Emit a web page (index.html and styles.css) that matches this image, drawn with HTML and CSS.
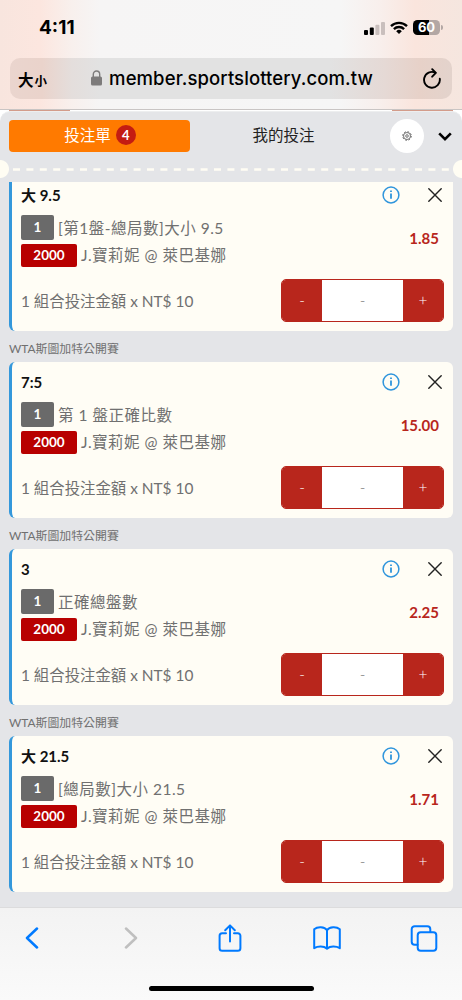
FILE: index.html
```html
<!DOCTYPE html>
<html lang="zh-Hant">
<head>
    <meta charset="UTF-8">
    <meta name="viewport" content="width=device-width, initial-scale=1.0">
    <title>投注單</title>
    <link rel="stylesheet" href="styles.css">
</head>
<body>
    <svg class="symbols" width="0" height="0">
        <symbol id="icon-info" viewBox="0 0 18 18">
            <circle cx="9" cy="9" r="7.9" fill="none" stroke="#2f95dc" stroke-width="1.5"/>
            <path d="M9 4.6v1.5M9 7.6v5.2" stroke="#2f95dc" stroke-width="1.8"/>
        </symbol>
        <symbol id="icon-close" viewBox="0 0 14 14">
            <path d="M.8.8l12.4 12.4M13.2.8L.8 13.2" stroke="#222" stroke-width="1.4" stroke-linecap="round"/>
        </symbol>
    </svg>

    <div class="phone">
        <header class="browser-top">
            <div class="status-bar">
                <span class="time">4:11</span>
                <div class="status-icons">
                    <svg width="21" height="14" viewBox="0 0 21 14">
                        <rect x="0" y="9" width="4" height="5" rx="1"/>
                        <rect x="5.8" y="6.5" width="4" height="7.5" rx="1"/>
                        <rect x="11.4" y="3.7" width="4" height="10.3" rx="1" fill="#c9bfbd"/>
                        <rect x="17" y="1" width="4" height="13" rx="1" fill="#c9bfbd"/>
                    </svg>
                    <svg width="18" height="13" viewBox="0 0 18 13">
                        <g fill="none" stroke="#000" stroke-width="2.3">
                            <path d="M1 5.1a11.3 11.3 0 0 1 16 0"/>
                            <path d="M3.9 8.1a7.2 7.2 0 0 1 10.2 0"/>
                        </g>
                        <path d="M9 13L6.2 10.2a4 4 0 0 1 5.6 0z"/>
                    </svg>
                    <div class="battery">60</div>
                </div>
            </div>
            <div class="address-bar">
                <span class="text-size">大<small>小</small></span>
                <span class="url">
                    <svg width="11" height="16" viewBox="0 0 11 16">
                        <rect x="0" y="6.5" width="11" height="9" rx="1.6" fill="#7d7b7b"/>
                        <path d="M2.3 7V4.2a3.2 3.2 0 0 1 6.4 0V7" fill="none" stroke="#7d7b7b" stroke-width="1.4"/>
                    </svg>
                    member.sportslottery.com.tw
                </span>
                <svg class="reload" width="18" height="21" viewBox="0 0 18 21" fill="none" stroke="#000" stroke-width="1.9" stroke-linecap="round" stroke-linejoin="round">
                    <path d="M16.800 10.800A7.900 7.900 0 1 1 12.400 4.700"/>
                    <path d="M9.200 1.200l3.600 3.700-3.600 3.800"/>
                </svg>
            </div>
        </header>

        <main class="page">
            <section class="slip">
                <nav class="slip-tabs">
                    <button class="tab active">投注單<span class="count">4</span></button>
                    <button class="tab">我的投注</button>
                    <span class="settings">
                        <svg width="10" height="10" viewBox="0 0 10 10" fill="none" stroke="#555">
                            <circle cx="5" cy="5" r="3.5" stroke-width=".8"/>
                            <circle cx="5" cy="5" r="4.3" stroke-width=".9" stroke-dasharray="1.7 1.677"/>
                            <circle cx="5" cy="5" r="1.3" stroke-width=".8"/>
                        </svg>
                    </span>
                    <svg class="chevron" width="14" height="9" viewBox="0 0 14 9" fill="none" stroke="#000" stroke-width="2.6">
                        <path d="M1.2 1.3L7 7.1l5.8-5.8"/>
                    </svg>
                </nav>
                <div class="ticket-edge">
                    <svg width="462" height="3"><path d="M13 1.5h436" stroke="#fffdf3" stroke-width="2.4" stroke-dasharray="7 6.4"/></svg>
                </div>

                <div class="bets">
                    <article class="bet">
                        <div class="bet-head">
                            <h2>大 9.5</h2>
                            <svg class="info"><use href="#icon-info"/></svg>
                            <svg class="close"><use href="#icon-close"/></svg>
                        </div>
                        <div class="bet-body">
                            <div class="lines">
                                <p><span class="badge">1</span>[第1盤-總局數]大小 9.5</p>
                                <p><span class="badge red">2000</span>J.寶莉妮 @ 萊巴基娜</p>
                            </div>
                            <span class="odds">1.85</span>
                        </div>
                        <div class="bet-foot">
                            <span class="stake">1 組合投注金額 x NT$ 10</span>
                            <div class="stepper"><button>-</button><span>-</span><button>+</button></div>
                        </div>
                    </article>

                    <h3 class="league">WTA斯圖加特公開賽</h3>
                    <article class="bet">
                        <div class="bet-head">
                            <h2>7:5</h2>
                            <svg class="info"><use href="#icon-info"/></svg>
                            <svg class="close"><use href="#icon-close"/></svg>
                        </div>
                        <div class="bet-body">
                            <div class="lines">
                                <p><span class="badge">1</span>第 1 盤正確比數</p>
                                <p><span class="badge red">2000</span>J.寶莉妮 @ 萊巴基娜</p>
                            </div>
                            <span class="odds">15.00</span>
                        </div>
                        <div class="bet-foot">
                            <span class="stake">1 組合投注金額 x NT$ 10</span>
                            <div class="stepper"><button>-</button><span>-</span><button>+</button></div>
                        </div>
                    </article>

                    <h3 class="league">WTA斯圖加特公開賽</h3>
                    <article class="bet">
                        <div class="bet-head">
                            <h2>3</h2>
                            <svg class="info"><use href="#icon-info"/></svg>
                            <svg class="close"><use href="#icon-close"/></svg>
                        </div>
                        <div class="bet-body">
                            <div class="lines">
                                <p><span class="badge">1</span>正確總盤數</p>
                                <p><span class="badge red">2000</span>J.寶莉妮 @ 萊巴基娜</p>
                            </div>
                            <span class="odds">2.25</span>
                        </div>
                        <div class="bet-foot">
                            <span class="stake">1 組合投注金額 x NT$ 10</span>
                            <div class="stepper"><button>-</button><span>-</span><button>+</button></div>
                        </div>
                    </article>

                    <h3 class="league">WTA斯圖加特公開賽</h3>
                    <article class="bet">
                        <div class="bet-head">
                            <h2>大 21.5</h2>
                            <svg class="info"><use href="#icon-info"/></svg>
                            <svg class="close"><use href="#icon-close"/></svg>
                        </div>
                        <div class="bet-body">
                            <div class="lines">
                                <p><span class="badge">1</span>[總局數]大小 21.5</p>
                                <p><span class="badge red">2000</span>J.寶莉妮 @ 萊巴基娜</p>
                            </div>
                            <span class="odds">1.71</span>
                        </div>
                        <div class="bet-foot">
                            <span class="stake">1 組合投注金額 x NT$ 10</span>
                            <div class="stepper"><button>-</button><span>-</span><button>+</button></div>
                        </div>
                    </article>
                </div>
            </section>
        </main>

        <footer class="browser-bottom">
            <div class="toolbar">
                <svg width="28" height="22" viewBox="0 0 14 22"><path d="M12 1.5L2 11l10 9.5"/></svg>
                <svg class="disabled" width="32" height="22" viewBox="0 0 14 22"><path d="M2 1.5L12 11 2 20.5"/></svg>
                <svg width="28" height="28" viewBox="0 0 24 28">
                    <path class="thin" d="M8 9.2H4.2A2.6 2.6 0 0 0 1.6 11.8v12.4a2.6 2.6 0 0 0 2.6 2.6h15.6a2.6 2.6 0 0 0 2.6-2.6V11.8a2.6 2.6 0 0 0-2.6-2.6H16"/>
                    <path class="thin" d="M12 17.5V1.6M7.2 6.2L12 1.4l4.8 4.8"/>
                </svg>
                <svg width="28" height="24" viewBox="0 0 28 24">
                    <path class="thin" d="M14 4.2C11.5.4 4.5.3 1.2 3.2v19c3.8-2.2 9.5-2.2 12.8.4 3.3-2.6 9-2.6 12.8-.4v-19C23.5.3 16.5.4 14 4.2zM14 4.2v18.2"/>
                </svg>
                <svg width="28" height="27" viewBox="0 0 27 27">
                    <path class="thin" d="M7 19.8H4.2a3 3 0 0 1-3-3V4.2a3 3 0 0 1 3-3h12.6a3 3 0 0 1 3 3V7"/>
                    <rect class="thin" x="7.2" y="7.2" width="18.6" height="18.6" rx="3"/>
                </svg>
            </div>
            <div class="home-indicator"></div>
        </footer>
    </div>
</body>
</html>
```
FILE: styles.css
```css
* {
    box-sizing: border-box;
}
body {
    margin: 0;
    font-family: Lato, "Noto Sans CJK TC", sans-serif;
    color: #707070;
}
svg {
    display: block;
    flex: none;
}
button {
    padding: 0;
    border: none;
    background: none;
    font: inherit;
}
.symbols {
    display: none;
}
.phone {
    width: 462px;
    height: 1000px;
    display: flex;
    flex-direction: column;
    overflow: hidden;
}

/* Browser chrome, top */
.browser-top {
    height: 110px;
    flex: none;
    border-bottom: 1px solid #c9c5c4;
    background: linear-gradient(90deg, #f8e5de 0, #fce6df 40px, #f8f0ed 72px, #f6f5f5 100px, #f6f6f6 340px, #f8efec 380px, #fae5dd 415px, #f5e6df 462px);
    font-family: Inter, "Noto Sans CJK TC", sans-serif;
    color: #000;
}
.status-bar {
    height: 58px;
    padding: 0 22px 0 39px;
    display: flex;
    justify-content: space-between;
    align-items: center;
}
.time {
    padding-bottom: 2px;
    font-size: 19px;
    font-weight: 700;
    line-height: 54px;
}
.status-icons {
    display: flex;
    align-items: center;
    gap: 5px;
    margin-top: -3px;
}
.battery {
    width: 27px;
    height: 15px;
    border-radius: 4.5px;
    background: linear-gradient(90deg, #000 60%, #b3a7a4 60%);
    color: #fff;
    font-size: 13px;
    font-weight: 700;
    line-height: 15px;
    text-align: center;
    position: relative;
}
.battery::after {
    content: "";
    position: absolute;
    left: 28px;
    top: 5px;
    width: 2px;
    height: 5px;
    border-radius: 0 2px 2px 0;
    background: #b3a7a4;
}
.address-bar {
    height: 41px;
    margin: 0 10px;
    padding: 0 11px 0 8px;
    border-radius: 10px;
    background: linear-gradient(90deg, #ead5ce 0, #ead3cb 32px, #e4dedc 62px, #e2e2e2 90px, #e2e2e2 320px, #e5d9d5 375px, #e7d1c8 410px, #e3d3cc 442px);
    display: flex;
    align-items: center;
    justify-content: space-between;
}
.text-size {
    font-size: 15.5px;
    font-weight: 700;
}
.text-size small {
    margin-left: 1px;
    font-size: 12.5px;
}
.url {
    display: flex;
    align-items: center;
    gap: 7px;
    margin-right: 6px;
    padding-bottom: 1px;
    font-size: 18.5px;
    font-weight: 500;
    letter-spacing: .1px;
}

/* Bet slip */
.page {
    height: 797px;
    padding-top: 1px;
    flex: none;
    background: linear-gradient(90deg, #fff 9px, #d39c8b 9px, #d39c8b 70px, #fff 70px, #fff 392px, #d39c8b 392px, #d39c8b 453px, #fff 453px);
}
.slip {
    height: 796px;
    padding-top: 8px;
    border-radius: 10px 10px 0 0;
    background: #e4e5e8;
    border-top: 1px solid #edeeef;
    display: flex;
    flex-direction: column;
}
.slip-tabs {
    height: 32px;
    padding: 0 10px 0 9px;
    display: flex;
    align-items: center;
}
.tab {
    width: 181px;
    height: 32px;
    margin-right: 6px;
    padding-bottom: 4px;
    border-radius: 4px;
    color: #222;
    font-size: 15.5px;
    display: flex;
    align-items: center;
    justify-content: center;
}
.tab.active {
    margin-right: 3px;
    padding-left: 1px;
    background: #ff7a00;
    color: #fff;
}
.count {
    width: 20px;
    height: 20px;
    margin: 2px 0 0 5px;
    border-radius: 50%;
    background: #c41c12;
    font-size: 13px;
    font-weight: 700;
    line-height: 20px;
}
.settings {
    width: 34px;
    height: 34px;
    margin-left: 10px;
    border-radius: 50%;
    background: #fff;
    display: flex;
    align-items: center;
    justify-content: center;
}
.chevron {
    margin-left: auto;
}
/* Perforated line with half-circle notches */
.ticket-edge {
    height: 30px;
    flex: none;
    display: flex;
    align-items: center;
    background:
        radial-gradient(circle at 0 17px, #fffdf3 8.5px, transparent 9.5px),
        radial-gradient(circle at 462px 17px, #fffdf3 8.5px, transparent 9.5px);
}
.ticket-edge svg {
    margin-top: 5px;
}
.bets {
    flex: 1;
    padding: 0 9px;
    overflow: hidden;
}
/* List is scrolled a little past the first card's top edge */
.bet:first-child {
    margin-top: -7px;
}
.bet {
    height: 156px;
    padding: 0 9px;
    border-left: 3px solid #3498db;
    border-radius: 6px;
    background: #fffdf5;
}
.bet-head {
    height: 40px;
    display: flex;
    align-items: center;
}
.bet-head h2 {
    flex: 1;
    margin: 0;
    color: #111;
    font-size: 15px;
    font-weight: 700;
    line-height: 20px;
}
.info {
    width: 18px;
    height: 18px;
    margin-right: 28px;
}
.close {
    width: 14px;
    height: 14px;
    margin-right: 2px;
}
.bet-body {
    height: 64px;
    display: flex;
    justify-content: space-between;
}
.lines p {
    height: 25px;
    margin: 0 0 2px;
    padding-bottom: 2px;
    display: flex;
    align-items: center;
    font-size: 15.5px;
    letter-spacing: .5px;
    white-space: pre;
}
.badge {
    width: 33px;
    height: 25px;
    margin-right: 4px;
    align-self: flex-start;
    border-radius: 2px;
    background: #6a6a6a;
    color: #fff;
    font-size: 13.5px;
    font-weight: 700;
    letter-spacing: 0;
    line-height: 25px;
    text-align: center;
}
.badge.red {
    width: 56px;
    height: 23px;
    margin-top: 2px;
    line-height: 23px;
    background: #b80000;
}
.odds {
    padding: 13px 5px 0 0;
    color: #b8261c;
    font-size: 15px;
    font-weight: 700;
    line-height: 21px;
}
.bet-foot {
    height: 43px;
    display: flex;
    justify-content: space-between;
    align-items: center;
    font-size: 15.4px;
}
.stake {
    padding-bottom: 2px;
}
.stepper {
    width: 163px;
    height: 43px;
    border: 1px solid #b8261c;
    border-radius: 5px;
    overflow: hidden;
    display: flex;
    text-align: center;
    line-height: 41px;
    font-weight: 300;
}
.stepper button {
    width: 40px;
    background: #b8261c;
    color: #fff;
}
.stepper span {
    flex: 1;
    background: #fff;
}
.league {
    height: 31px;
    margin: 0;
    padding-top: 3px;
    font-size: 11.9px;
    font-weight: 400;
    line-height: 30px;
}

/* Browser chrome, bottom */
.browser-bottom {
    flex: 1;
    border-top: 1px solid #dcdcdd;
    background: linear-gradient(#f3f3f3, #fafafa);
}
.toolbar {
    height: 60px;
    padding: 0 24px 0 18px;
    display: flex;
    align-items: center;
    justify-content: space-between;
    fill: none;
    stroke: #007aff;
    stroke-width: 2.5;
    stroke-linecap: round;
    stroke-linejoin: round;
}
.toolbar .thin {
    stroke-width: 2;
}
.toolbar .disabled {
    stroke: #bfbfbf;
}
.home-indicator {
    width: 165px;
    height: 5px;
    margin: 18px auto 0;
    border-radius: 3px;
    background: #000;
}
```
